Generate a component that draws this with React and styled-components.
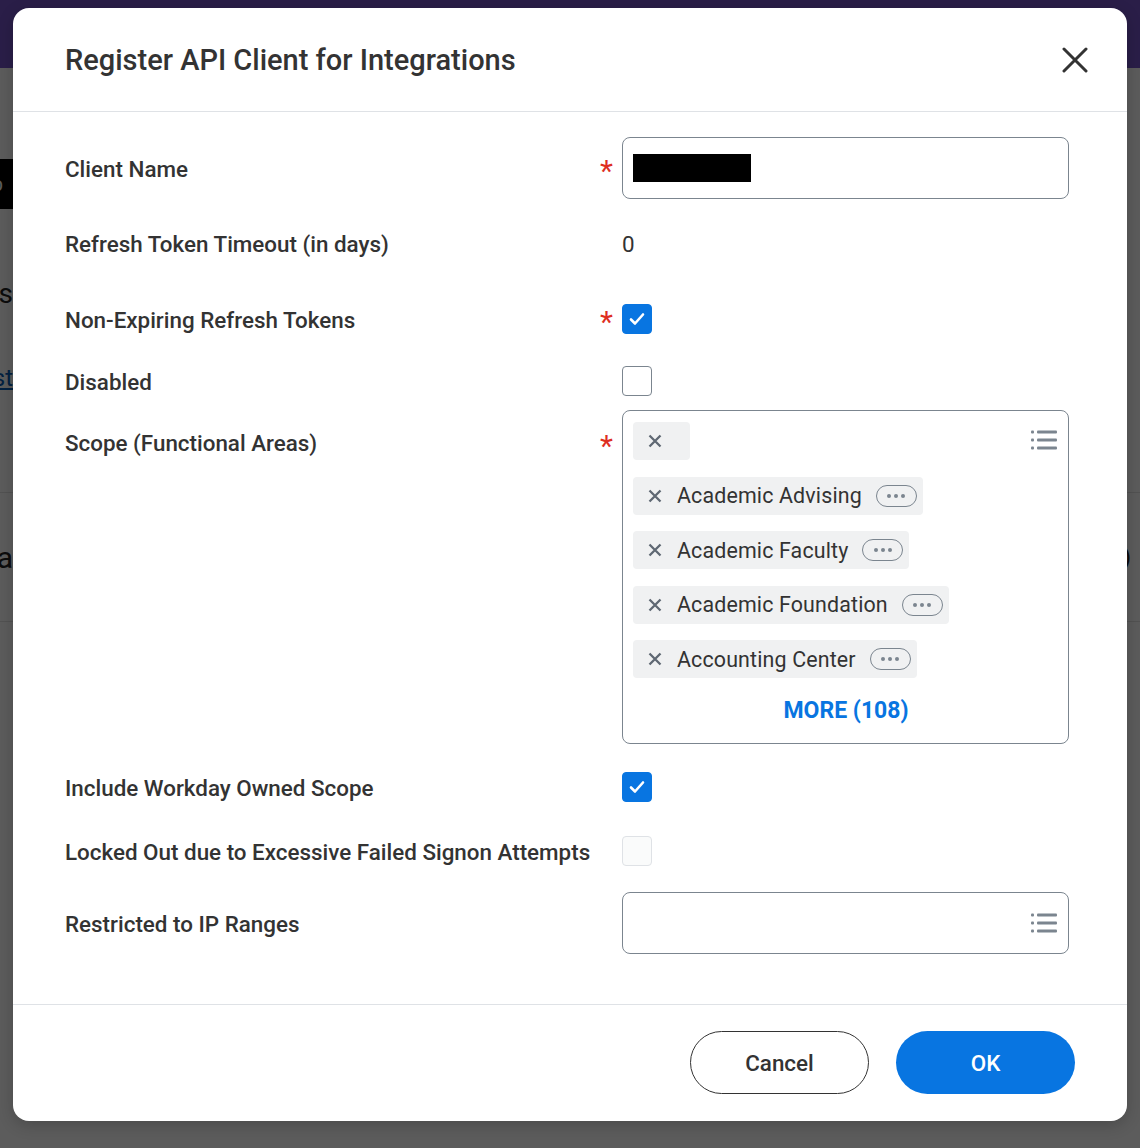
import React from 'react';
import styled, { createGlobalStyle } from 'styled-components';

const GlobalStyle = createGlobalStyle`
  html, body { margin: 0; padding: 0; }
  body { font-family: Roboto, "Open Sans", "Liberation Sans", sans-serif; background: #fff; }
  * { box-sizing: border-box; }
`;

/* ---------- page behind the dialog ---------- */

const Page = styled.div`
  position: relative;
  width: 1140px;
  height: 1148px;
  overflow: hidden;
  background: #fff;
`;

const TopBar = styled.div`
  height: 68px;
  background: #7553c8;
`;

const PageBody = styled.div`
  display: flex;
  flex-direction: column;
`;

const PageRow = styled.div`
  display: flex;
  justify-content: space-between;
  align-items: center;
  height: ${p => p.$h}px;
  margin-top: ${p => p.$top || 0}px;
  border-top: ${p => (p.$lined ? '1px solid #e3e3e3' : 'none')};
  border-bottom: ${p => (p.$lined ? '1px solid #e3e3e3' : 'none')};
`;

const EdgeClip = styled.div`
  width: 13px;
  height: 100%;
  overflow: hidden;
  display: flex;
  align-items: center;
  justify-content: flex-end;
`;

const DarkButton = styled.div`
  flex-shrink: 0;
  height: 50px;
  padding: 0 10px 0 20px;
  background: #000;
  color: #fff;
  font-size: 20px;
  display: flex;
  align-items: center;
`;

const PageText = styled.span`
  flex-shrink: 0;
  white-space: nowrap;
  font-size: ${p => p.$size || 24}px;
  color: ${p => p.$color || '#333'};
  text-decoration: ${p => (p.$link ? 'underline' : 'none')};
  padding-right: ${p => p.$pr || 0}px;
`;

const Overlay = styled.div`
  position: absolute;
  inset: 0;
  background: rgba(0, 0, 0, 0.64);
  display: flex;
  justify-content: center;
  align-items: flex-start;
  padding-top: 8px;
`;

/* ---------- dialog ---------- */

const Modal = styled.div`
  width: 1114px;
  background: #fff;
  border-radius: 16px;
  overflow: hidden;
  box-shadow: 0 4px 16px rgba(0, 0, 0, 0.2);
  color: #333;
`;

const Header = styled.div`
  height: 104px;
  display: flex;
  align-items: center;
  justify-content: space-between;
  padding: 0 39px 0 52px;
  border-bottom: 1px solid #dfe2e6;
`;

const Title = styled.h1`
  margin: 0;
  font-size: 29px;
  font-weight: 500;
  color: #333;
`;

const CloseButton = styled.button`
  width: 26px;
  height: 26px;
  padding: 0;
  border: none;
  background: none;
  display: flex;
  cursor: pointer;
`;

const Body = styled.div`
  display: flex;
  flex-direction: column;
  padding: 25px 58px 50px 52px;
`;

const Row = styled.div`
  display: grid;
  grid-template-columns: 1fr 24px 447px;
  align-items: ${p => (p.$start ? 'start' : 'center')};
  margin-top: ${p => p.$top || 0}px;
`;

const Label = styled.div`
  font-size: 22.4px;
  font-weight: 500;
  color: #333;
  white-space: nowrap;
  line-height: ${p => (p.$tall ? '62px' : '26px')};
  padding-top: 2px;
`;

const Star = styled.span`
  color: #de2e21;
  font-size: 30px;
  line-height: 1;
  height: 20px;
  display: flex;
  align-items: flex-start;
  justify-content: flex-start;
  padding-left: 2px;
  margin-top: ${p => p.$top || -4}px;
`;

const TextInput = styled.div`
  height: 62px;
  border: 1px solid #7b858f;
  border-radius: 8px;
  display: flex;
  align-items: center;
  justify-content: ${p => (p.$end ? 'flex-end' : 'flex-start')};
  padding: 0 11px 0 10px;
`;

const Redacted = styled.div`
  width: 118px;
  height: 28px;
  background: #000;
`;

const Value = styled.div`
  font-size: 22.4px;
  line-height: 26px;
  padding-top: 2px;
  color: #333;
`;

const Box = styled.div`
  width: 30px;
  height: 30px;
  border-radius: 4px;
  display: flex;
  align-items: center;
  justify-content: center;
  background: ${p => (p.$checked ? '#0875e1' : p.$disabled ? '#fafbfb' : '#fff')};
  border: 1px solid ${p => (p.$checked ? '#0875e1' : p.$disabled ? '#dfe2e6' : '#7b858f')};
`;

const ScopeBox = styled.div`
  height: 334px;
  border: 1px solid #7b858f;
  border-radius: 8px;
  display: flex;
  padding: 11px 11px 0 10px;
`;

const ScopeContent = styled.div`
  flex: 1;
  display: flex;
  flex-direction: column;
`;

const ChipList = styled.div`
  display: flex;
  flex-direction: column;
  align-items: flex-start;
  gap: 16.5px;
`;

const Chip = styled.div`
  height: 38px;
  background: #f0f1f2;
  border-radius: 4px;
  display: flex;
  align-items: center;
  padding: 0 ${p => (p.$empty ? 28 : 6)}px 0 15px;
`;

const ChipText = styled.span`
  margin-left: 15px;
  font-size: 21.4px;
  letter-spacing: 0.15px;
  color: #333;
`;

const Pill = styled.span`
  margin-left: 14px;
  width: 41px;
  height: 22px;
  border: 1px solid #7b858f;
  border-radius: 11px;
  display: flex;
  align-items: center;
  justify-content: center;
  gap: 3px;
`;

const Dot = styled.span`
  width: 4px;
  height: 4px;
  border-radius: 50%;
  background: #7b858f;
`;

const More = styled.div`
  height: 65px;
  display: flex;
  align-items: center;
  justify-content: center;
  padding-left: 28px;
  color: #0875e1;
  font-size: 23px;
  font-weight: 700;
`;

const ListIconWrap = styled.div`
  margin-top: ${p => p.$top || 0}px;
  display: flex;
`;

const Footer = styled.div`
  display: flex;
  justify-content: flex-end;
  gap: 27px;
  padding: 26px 52px 27px;
  border-top: 1px solid #dfe2e6;
`;

const Button = styled.button`
  width: 179px;
  height: 63px;
  border-radius: 32px;
  font-family: inherit;
  font-size: 22.4px;
  font-weight: 500;
  cursor: pointer;
  background: ${p => (p.$primary ? '#0875e1' : '#fff')};
  color: ${p => (p.$primary ? '#fff' : '#333')};
  border: ${p => (p.$primary ? 'none' : '1.5px solid #333')};
`;

/* ---------- icons ---------- */

const CloseIcon = () => (
  <svg width="26" height="26" viewBox="0 0 26 26">
    <path d="M2 2 L24 24 M24 2 L2 24" stroke="#333" strokeWidth="3" strokeLinecap="round" />
  </svg>
);

const SmallX = () => (
  <svg width="14" height="14" viewBox="0 0 14 14">
    <path d="M1.5 1.5 L12.5 12.5 M12.5 1.5 L1.5 12.5" stroke="#5f6873" strokeWidth="2.3" />
  </svg>
);

const CheckMark = () => (
  <svg width="16" height="14" viewBox="0 0 16 14">
    <path d="M2 7.5 L6 11.5 L14 2.5" fill="none" stroke="#fff" strokeWidth="2.6" strokeLinecap="round" strokeLinejoin="round" />
  </svg>
);

const ListIcon = () => (
  <svg width="26" height="20" viewBox="0 0 26 20">
    <g fill="#7b858f">
      <rect x="0" y="0.5" width="3" height="3" rx="1" />
      <rect x="0" y="8.5" width="3" height="3" rx="1" />
      <rect x="0" y="16.5" width="3" height="3" rx="1" />
      <rect x="6" y="0.5" width="20" height="3" rx="1" />
      <rect x="6" y="8.5" width="20" height="3" rx="1" />
      <rect x="6" y="16.5" width="20" height="3" rx="1" />
    </g>
  </svg>
);

const Checkbox = ({ checked, disabled }) => (
  <Box $checked={checked} $disabled={disabled}>
    {checked && <CheckMark />}
  </Box>
);

const scopes = ['Academic Advising', 'Academic Faculty', 'Academic Foundation', 'Accounting Center'];

function App() {
  return (
    <>
      <GlobalStyle />
      <Page>
        <TopBar />
        <PageBody>
          <PageRow $h={50} $top={91}>
            <EdgeClip>
              <DarkButton>Setup</DarkButton>
            </EdgeClip>
          </PageRow>
          <PageRow $h={40} $top={64}>
            <EdgeClip>
              <PageText $size={28} $color="#222">Tasks</PageText>
            </EdgeClip>
          </PageRow>
          <PageRow $h={30} $top={50}>
            <EdgeClip>
              <PageText $size={24} $color="#0b5bb5" $link>Test</PageText>
            </EdgeClip>
          </PageRow>
          <PageRow $h={130} $top={99} $lined>
            <EdgeClip>
              <PageText $size={30} $color="#222">Data</PageText>
            </EdgeClip>
            <EdgeClip>
              <PageText $size={24} $color="#222" $pr={9}>(10)</PageText>
            </EdgeClip>
          </PageRow>
        </PageBody>

        <Overlay>
          <Modal>
            <Header>
              <Title>Register API Client for Integrations</Title>
              <CloseButton aria-label="Close">
                <CloseIcon />
              </CloseButton>
            </Header>

            <Body>
              <Row>
                <Label>Client Name</Label>
                <Star>*</Star>
                <TextInput>
                  <Redacted />
                </TextInput>
              </Row>

              <Row $top={30}>
                <Label>Refresh Token Timeout (in days)</Label>
                <span />
                <Value>0</Value>
              </Row>

              <Row $top={47}>
                <Label>Non-Expiring Refresh Tokens</Label>
                <Star>*</Star>
                <Checkbox checked />
              </Row>

              <Row $top={32}>
                <Label>Disabled</Label>
                <span />
                <Checkbox />
              </Row>

              <Row $top={14} $start>
                <Label $tall>Scope (Functional Areas)</Label>
                <Star $top={21}>*</Star>
                <ScopeBox>
                  <ScopeContent>
                    <ChipList>
                      <Chip $empty>
                        <SmallX />
                      </Chip>
                      {scopes.map(s => (
                        <Chip key={s}>
                          <SmallX />
                          <ChipText>{s}</ChipText>
                          <Pill>
                            <Dot />
                            <Dot />
                            <Dot />
                          </Pill>
                        </Chip>
                      ))}
                    </ChipList>
                    <More>MORE (108)</More>
                  </ScopeContent>
                  <ListIconWrap $top={8}>
                    <ListIcon />
                  </ListIconWrap>
                </ScopeBox>
              </Row>

              <Row $top={28}>
                <Label>Include Workday Owned Scope</Label>
                <span />
                <Checkbox checked />
              </Row>

              <Row $top={34}>
                <Label>Locked Out due to Excessive Failed Signon Attempts</Label>
                <span />
                <Checkbox disabled />
              </Row>

              <Row $top={26}>
                <Label>Restricted to IP Ranges</Label>
                <span />
                <TextInput $end>
                  <ListIcon />
                </TextInput>
              </Row>
            </Body>

            <Footer>
              <Button>Cancel</Button>
              <Button $primary>OK</Button>
            </Footer>
          </Modal>
        </Overlay>
      </Page>
    </>
  );
}

export default App;
